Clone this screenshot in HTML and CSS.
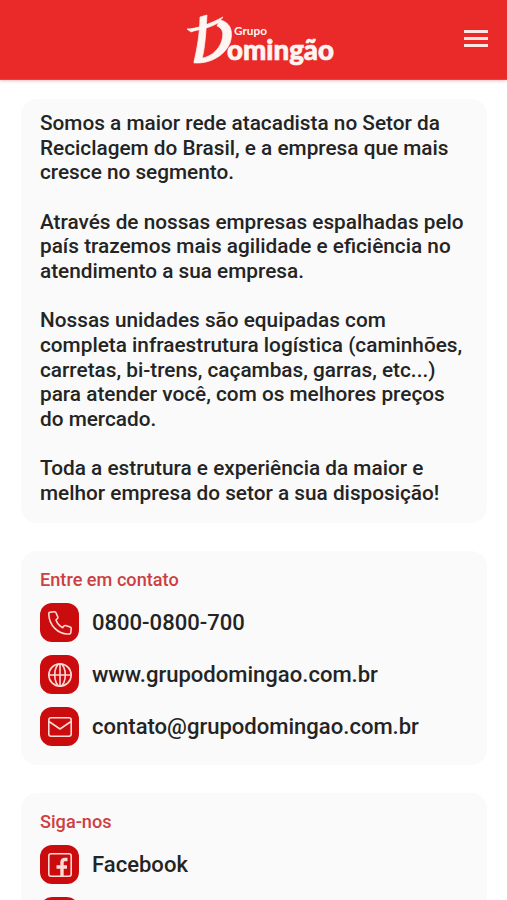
FILE: index.html
```html
<!DOCTYPE html>
<html lang="pt-BR">
<head>
    <meta charset="UTF-8">
    <meta name="viewport" content="width=device-width, initial-scale=1.0">
    <title>Grupo Domingão</title>
    <link rel="stylesheet" href="styles.css">
</head>
<body>
<header class="header">
    <svg class="logo" viewBox="0 0 150 54" role="img" aria-label="Grupo Domingão">
        <path class="logo-mark" d="M1 14 C10 14 24 9 37 2 L32 8 C25 12 19 13 17 14 C12 15 7 16 5 17 Z"/>
        <path class="logo-mark" d="M14 2 L21 0 C20 16 19 33 16 44 L8 47 C11 34 14 18 14 2 Z"/>
        <path class="logo-mark" d="M34 5 C44 7 48 16 44 28 C39 40 25 49 8 48 L9 44 C23 44 33 36 36 25 C38 17 36 13 31 11 Z"/>
        <text class="logo-small" x="48" y="20" textLength="33" lengthAdjust="spacingAndGlyphs">Grupo</text>
        <text class="logo-name" x="41" y="45" textLength="107" lengthAdjust="spacingAndGlyphs">omingão</text>
    </svg>
    <button class="menu" aria-label="Menu">
        <span></span>
        <span></span>
        <span></span>
    </button>
</header>

<main class="content">
    <section class="card about">
        <p>Somos a maior rede atacadista no Setor da<br>Reciclagem do Brasil, e a empresa que mais<br>cresce no segmento.</p>
        <p>Através de nossas empresas espalhadas pelo<br>país trazemos mais agilidade e eficiência no<br>atendimento a sua empresa.</p>
        <p>Nossas unidades são equipadas com<br>completa infraestrutura logística (caminhões,<br>carretas, bi-trens, caçambas, garras, etc...)<br>para atender você, com os melhores preços<br>do mercado.</p>
        <p>Toda a estrutura e experiência da maior e<br>melhor empresa do setor a sua disposição!</p>
    </section>

    <section class="card">
        <h2>Entre em contato</h2>
        <ul class="links">
            <li>
                <span class="icon">
                    <svg viewBox="0 0 24 24"><path d="M1.8 1.2 L6.4 .8 Q7.6 .7 8 1.8 L9.8 6 Q10.1 6.8 9.4 7.5 L8 9 C9 12 11.5 14.8 14.6 16.6 L16 15 Q16.6 14.3 17.5 14.5 L22.2 16 Q23.3 16.3 23.2 17.5 L22.8 21.6 Q22.7 22.8 21.5 22.9 C10 24 .8 14 .8 2.5 Q.8 1.3 1.8 1.2 Z"/></svg>
                </span>
                <span>0800-0800-700</span>
            </li>
            <li>
                <span class="icon">
                    <svg viewBox="0 0 24 24"><circle cx="12" cy="12" r="11.2"/><ellipse cx="12" cy="12" rx="5.3" ry="11.2"/><path d="M.8 12 H23.2 M12 .8 V23.2"/></svg>
                </span>
                <span>www.grupodomingao.com.br</span>
            </li>
            <li>
                <span class="icon">
                    <svg viewBox="0 0 24 24"><rect x=".8" y="2.8" width="22.4" height="18.4" rx="2.2"/><path d="M1 6.5 L12 14 L23 6.5"/></svg>
                </span>
                <span>contato@grupodomingao.com.br</span>
            </li>
        </ul>
    </section>

    <section class="card last">
        <h2>Siga-nos</h2>
        <ul class="links">
            <li>
                <span class="icon">
                    <svg viewBox="0 0 24 24"><rect x=".8" y=".8" width="22.4" height="22.4" rx="2.2"/><path class="thick" d="M14 23 V9.5 Q14 6.5 17 6.5 H19.5 M8.5 14 H19"/></svg>
                </span>
                <span>Facebook</span>
            </li>
            <li>
                <span class="icon"></span>
            </li>
        </ul>
    </section>
</main>
</body>
</html>
```

FILE: styles.css
```css
* {
    box-sizing: border-box;
}
body {
    margin: 0;
    height: 900px;
    overflow: hidden;
    background-color: #fff;
    color: #242424;
    font-family: Roboto, sans-serif;
    font-weight: 500;
}
.header {
    display: grid;
    grid-template-columns: 1fr 150px 1fr;
    align-items: center;
    height: 80px;
    padding: 0 19px 0 34px;
    background-color: #e92a29;
    border-bottom: 1px solid #d8494a;
    box-shadow: 0 1px 3px rgba(200, 0, 0, 0.25);
}
.logo {
    grid-column: 2;
    width: 150px;
    height: 54px;
    margin-top: 5px;
    overflow: visible;
}
.logo-mark,
.logo text {
    fill: #fff5f2;
    stroke: #fff5f2;
    stroke-width: 0.7;
}
.logo .logo-small {
    font: 700 12px Lato, sans-serif;
    stroke-width: 0;
}
.logo-name {
    font: 900 28px Lato, sans-serif;
}
.menu {
    display: flex;
    flex-direction: column;
    justify-self: end;
    gap: 4px;
    width: 24px;
    margin-top: -3px;
    padding: 0;
    border: none;
    background: none;
}
.menu span {
    width: 24px;
    height: 3px;
    background-color: #ffe4e2;
}
.content {
    display: flex;
    flex-direction: column;
    gap: 28px;
    height: 820px;
    padding: 19px 20px 0 21px;
    overflow: hidden;
}
.card {
    flex-shrink: 0;
    height: 214px;
    padding: 19px;
    border-radius: 16px;
    background-color: #fafafa;
}
.about {
    height: 424px;
    padding-top: 12px;
    font-size: 20.77px;
    line-height: 24.65px;
    white-space: nowrap;
}
.about p {
    margin: 0 0 24.65px;
}
/* runs off the bottom of the screen */
.last {
    height: 107px;
    border-radius: 16px 16px 0 0;
    overflow: hidden;
}
h2 {
    margin: 0;
    color: #cd3f43;
    font-size: 18.15px;
    font-weight: 500;
    line-height: 20px;
}
.links {
    display: flex;
    flex-direction: column;
    gap: 13px;
    margin: 13px 0 0;
    padding: 0;
    list-style: none;
}
.links li {
    display: flex;
    align-items: center;
    gap: 13px;
    height: 39px;
    font-size: 22.05px;
}
.icon {
    display: flex;
    align-items: center;
    justify-content: center;
    width: 39px;
    height: 39px;
    border-radius: 12px;
    background-color: #ca0c0f;
}
.icon svg {
    width: 24px;
    height: 24px;
    fill: none;
    stroke: #ffd9d5;
    stroke-width: 1.6;
    stroke-linejoin: round;
}
.icon .thick {
    stroke-width: 3.4;
}
```
